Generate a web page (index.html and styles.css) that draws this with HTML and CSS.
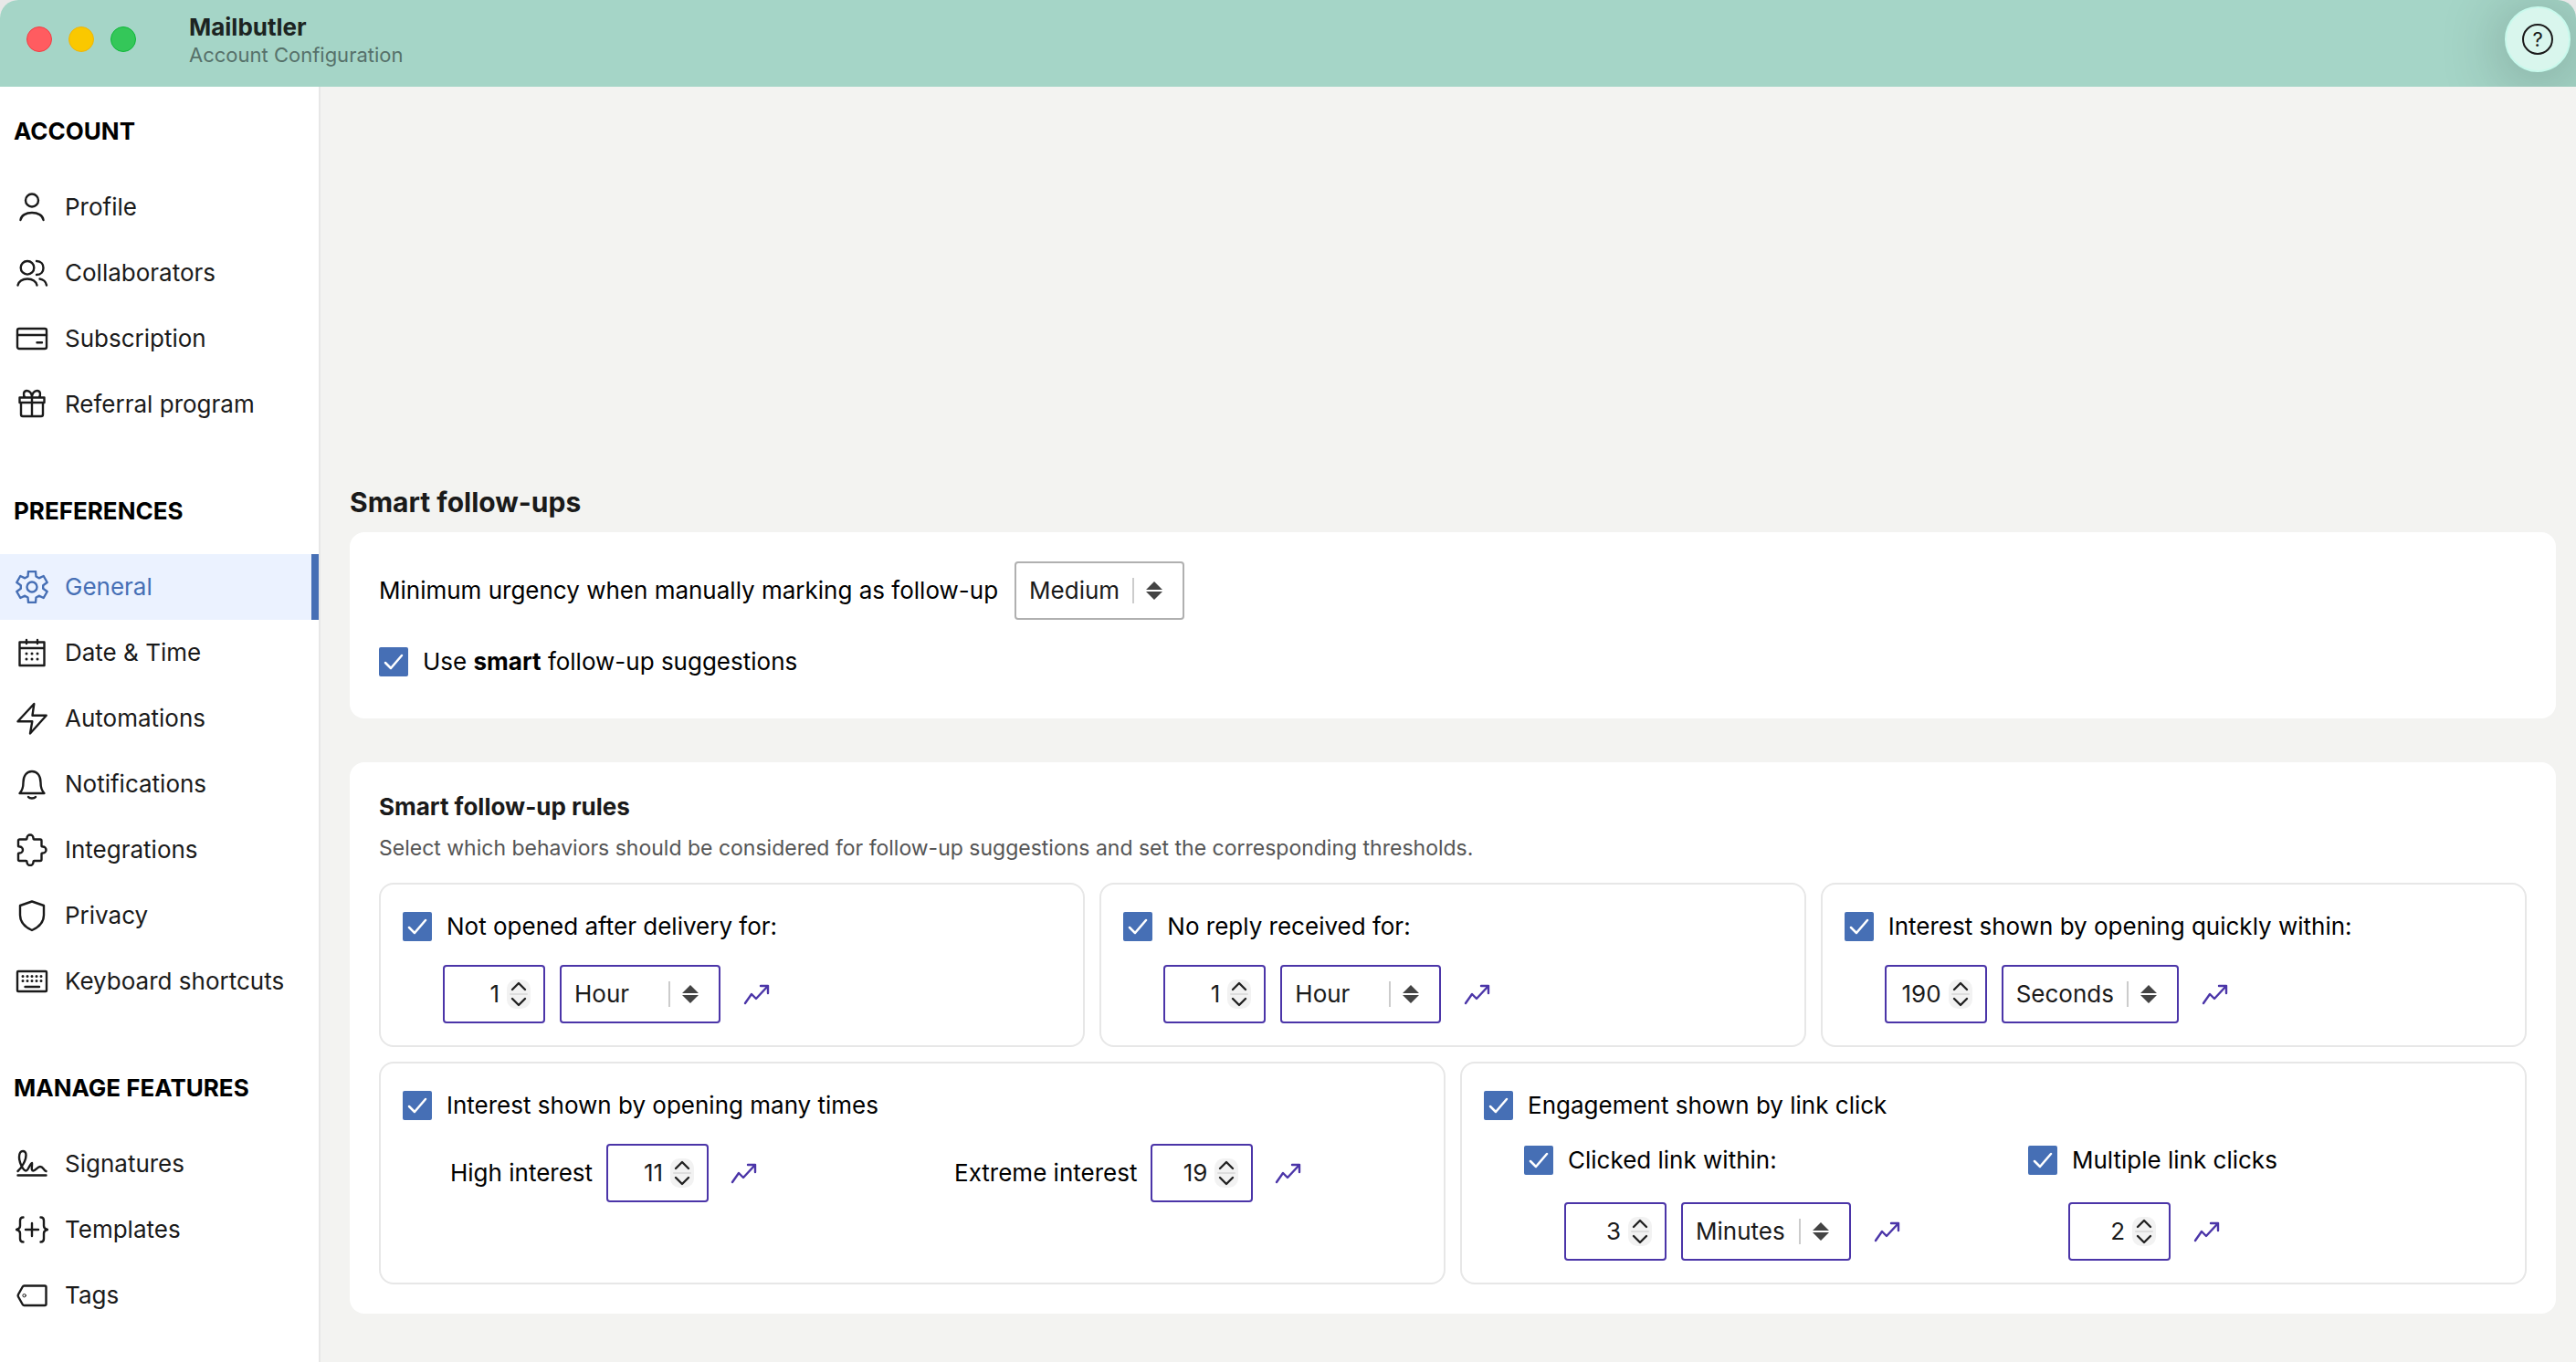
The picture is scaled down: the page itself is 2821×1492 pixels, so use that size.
FILE: index.html
```html
<!DOCTYPE html>
<html lang="en">
<head>
  <meta charset="UTF-8">
  <title>Mailbutler</title>
  <link rel="stylesheet" href="styles.css">
</head>
<body>
  <!-- Shared icons -->
  <svg class="sprite" aria-hidden="true">
    <symbol id="trend" viewBox="0 0 30 24">
      <path d="M2 22L9 12l5 5L27 3M19 3h8v8" />
    </symbol>
    <symbol id="stepper" viewBox="0 0 26 32">
      <path class="step-line" d="M4 16h18" />
      <path d="M6 11l7-7 7 7M6 21l7 7 7-7" />
    </symbol>
    <symbol id="arrows" viewBox="0 0 34 28">
      <path class="divider" d="M1 0v28" />
      <path class="triangle" d="M24 4l9 9H15zM24 24l9-9H15z" />
    </symbol>
  </svg>

  <div class="window">
    <header class="titlebar">
      <div class="lights">
        <span class="light red"></span>
        <span class="light yellow"></span>
        <span class="light green"></span>
      </div>
      <div class="titles">
        <h1>Mailbutler</h1>
        <p>Account Configuration</p>
      </div>
      <button class="help" aria-label="Help"><span>?</span></button>
    </header>

    <div class="layout">
      <nav class="sidebar">
        <section class="group">
          <h2>ACCOUNT</h2>
          <a href="#"><svg viewBox="0 0 36 36"><circle cx="18" cy="10.5" r="7" /><path d="M5.5 32c.5-5 6-8 12.5-8s12 3 12.5 8" /></svg>Profile</a>
          <a href="#"><svg viewBox="0 0 36 36"><circle cx="13" cy="12.3" r="7.3" /><path d="M2.5 31.5c.5-4 5-7 10.500-7s10 3 10.500 7M23 5c5 0 7.500 3.500 7.500 7.500S28 20 23 20M26.5 24.5c4 .5 7 3.500 7.500 7" /></svg>Collaborators</a>
          <a href="#"><svg viewBox="0 0 36 36"><rect x="2" y="7" width="32" height="22" rx="2" /><path d="M2 14h32M23.5 22.3h5.5" /></svg>Subscription</a>
          <a href="#"><svg viewBox="0 0 36 36"><path d="M4.5 10.5h27V16h-27zM6 16v13a2 2 0 0 0 2 2h20a2 2 0 0 0 2-2V16M18 10.5V31M18 10.5C18 6 15.5 3 12.500 3 8.500 3 8 8 10.500 10.5M18 10.5C18 6 20.500 3 23.500 3c4 0 4.500 5 2 7.500" /></svg>Referral program</a>
        </section>

        <section class="group">
          <h2>PREFERENCES</h2>
          <a href="#" class="active"><svg viewBox="0 0 36 36"><path d="M13.5 6.5L14 1h8l.5 5.500 3.200 1.800 5-2.300 4 7-4.500 3.200v3.600l4.500 3.200-4 7-5-2.300-3.200 1.800L22 35h-8l-.5-5.500-3.200-1.800-5 2.300-4-7 4.500-3.200v-3.600L1.300 13l4-7 5 2.300z" /><circle cx="18" cy="18" r="5.5" /></svg>General</a>
          <a href="#"><svg viewBox="0 0 36 36"><path d="M4.5 6.5h27V32h-27zM4.5 13h27M12 4v4M24 4v4" /><path class="dots" d="M12 19h0M18 19h0M24 19h0M12 25h0M18 25h0M24 25h0" /></svg>Date &amp; Time</a>
          <a href="#"><svg viewBox="0 0 36 36"><path d="M20.3 2L2.5 21.3h15.8L16 34.5l17.700-19.800H18.500z" /></svg>Automations</a>
          <a href="#"><svg viewBox="0 0 36 36"><path d="M4.5 28c3-3 4-6 4-12 0-7 3.500-12 9.500-12s9.500 5 9.500 12c0 6 1 9 4 12zM14 32c1.500 2 6.500 2 8 0" /></svg>Notifications</a>
          <a href="#"><svg viewBox="0 0 36 36"><path d="M3 8a1.500 1.500 0 0 1 1.500-1.500h7q1 0 1-1.500a3.500 3.500 0 0 1 7 0q0 1.500 1 1.500H27A1.500 1.500 0 0 1 28.500 8v5.500q0 1 1.500 1a3.500 3.500 0 0 1 0 7q-1.500 0-1.500 1V28.500A1.500 1.500 0 0 1 27 30h-6.500q-1 0-1 1.500a3.500 3.500 0 0 1-7 0q0-1.500-1-1.500h-7A1.500 1.500 0 0 1 3 28.500v-6q0-1 1.500-1a3.500 3.500 0 0 0 0-7q-1.500 0-1.500-1z" /></svg>Integrations</a>
          <a href="#"><svg viewBox="0 0 36 36"><path d="M18 2.500L31 7v10.500c0 8-5 13-13 16.500C10 30.500 5 25.500 5 17.500V7z" /></svg>Privacy</a>
          <a href="#"><svg viewBox="0 0 36 36"><rect x="2" y="7" width="32" height="22" rx="1" /><path d="M10.500 24H26" /><path class="dots" d="M8 12.500h0M13 12.500h0M18 12.500h0M23 12.500h0M28 12.500h0M8 17.500h0M13 17.500h0M18 17.500h0M23 17.500h0M28 17.500h0" /></svg>Keyboard shortcuts</a>
        </section>

        <section class="group">
          <h2>MANAGE FEATURES</h2>
          <a href="#"><svg viewBox="0 0 36 36"><path d="M2.500 30.500h31M2.500 26C7 22 11.500 14 11.500 8.500 11.500 5 10 4 8 4S4 6 4 10.500C4 16 8 25.500 11.500 25.500c2.500 0 4-7.500 6.500-8.500.5 3-1.500 8.500 1.500 8.500 2.500 0 4.500-4.500 7.500-4.500 3.500 0 3.500 4 6.500 5" /></svg>Signatures</a>
          <a href="#"><svg viewBox="0 0 36 36"><path d="M8.500 4.500C5.500 4.500 5 6 5 8v6q0 3-4 4 4 1 4 4v6c0 2 .5 3.500 3.500 3.500M27.500 4.500c3 0 3.500 1.500 3.500 3.500v6q0 3 4 4-4 1-4 4v6c0 2-.5 3.500-3.500 3.500M18 11v14M11 18h14" /></svg>Templates</a>
          <a href="#"><svg viewBox="0 0 36 36"><path d="M9.500 7.500H32a1.500 1.500 0 0 1 1.500 1.500v18.500A1.500 1.500 0 0 1 32 29H9.500a2 2 0 0 1-1.700-1L3 19.500a2.500 2.500 0 0 1 0-2.500l4.800-8.500a2 2 0 0 1 1.700-1z" /><circle class="thin" cx="9.600" cy="18.200" r="1.700" /></svg>Tags</a>
        </section>
      </nav>

      <main class="content">
        <h2>Smart follow-ups</h2>

        <section class="card">
          <div class="row urgency">
            <label for="urgency">Minimum urgency when manually marking as follow-up</label>
            <div class="select gray">
              <select id="urgency"><option>Medium</option></select>
              <svg><use href="#arrows" /></svg>
            </div>
          </div>
          <label class="check"><input type="checkbox" checked><span>Use <b>smart</b> follow-up suggestions</span></label>
        </section>

        <section class="card rules">
          <h3>Smart follow-up rules</h3>
          <p>Select which behaviors should be considered for follow-up suggestions and set the corresponding thresholds.</p>

          <div class="grid three">
            <div class="rule">
              <label class="check"><input type="checkbox" checked>Not opened after delivery for:</label>
              <div class="row indent">
                <div class="number"><input type="number" value="1" aria-label="Not opened amount"><svg><use href="#stepper" /></svg></div>
                <div class="select short">
                  <select aria-label="Not opened unit"><option>Hour</option></select>
                  <svg><use href="#arrows" /></svg>
                </div>
                <button class="trend" aria-label="Suggest value"><svg><use href="#trend" /></svg></button>
              </div>
            </div>
            <div class="rule">
              <label class="check"><input type="checkbox" checked>No reply received for:</label>
              <div class="row indent">
                <div class="number"><input type="number" value="1" aria-label="No reply amount"><svg><use href="#stepper" /></svg></div>
                <div class="select short">
                  <select aria-label="No reply unit"><option>Hour</option></select>
                  <svg><use href="#arrows" /></svg>
                </div>
                <button class="trend" aria-label="Suggest value"><svg><use href="#trend" /></svg></button>
              </div>
            </div>
            <div class="rule">
              <label class="check"><input type="checkbox" checked>Interest shown by opening quickly within:</label>
              <div class="row indent">
                <div class="number"><input type="number" value="190" aria-label="Quick opening amount"><svg><use href="#stepper" /></svg></div>
                <div class="select long">
                  <select aria-label="Quick opening unit"><option>Seconds</option></select>
                  <svg><use href="#arrows" /></svg>
                </div>
                <button class="trend" aria-label="Suggest value"><svg><use href="#trend" /></svg></button>
              </div>
            </div>
          </div>

          <div class="grid two">
            <div class="rule">
              <label class="check"><input type="checkbox" checked>Interest shown by opening many times</label>
              <div class="columns">
                <div class="row interest">
                  <label for="high">High interest</label>
                  <div class="number"><input type="number" id="high" value="11"><svg><use href="#stepper" /></svg></div>
                  <button class="trend" aria-label="Suggest value"><svg><use href="#trend" /></svg></button>
                </div>
                <div class="row interest">
                  <label for="extreme">Extreme interest</label>
                  <div class="number"><input type="number" id="extreme" value="19"><svg><use href="#stepper" /></svg></div>
                  <button class="trend" aria-label="Suggest value"><svg><use href="#trend" /></svg></button>
                </div>
              </div>
            </div>
            <div class="rule">
              <label class="check"><input type="checkbox" checked>Engagement shown by link click</label>
              <div class="columns clicks">
                <div>
                  <label class="check"><input type="checkbox" checked>Clicked link within:</label>
                  <div class="row indent">
                    <div class="number"><input type="number" value="3" aria-label="Clicked link amount"><svg><use href="#stepper" /></svg></div>
                    <div class="select">
                      <select aria-label="Clicked link unit"><option>Minutes</option></select>
                      <svg><use href="#arrows" /></svg>
                    </div>
                    <button class="trend" aria-label="Suggest value"><svg><use href="#trend" /></svg></button>
                  </div>
                </div>
                <div>
                  <label class="check"><input type="checkbox" checked>Multiple link clicks</label>
                  <div class="row indent">
                    <div class="number"><input type="number" value="2" aria-label="Number of link clicks"><svg><use href="#stepper" /></svg></div>
                    <button class="trend" aria-label="Suggest value"><svg><use href="#trend" /></svg></button>
                  </div>
                </div>
              </div>
            </div>
          </div>
        </section>
      </main>
    </div>
  </div>
</body>
</html>
```
FILE: styles.css
```css
* {
  box-sizing: border-box;
}

body {
  margin: 0;
  background-color: #e8e8e8;
  color: #000;
  font-family: Inter, "Liberation Sans", sans-serif;
  font-size: 26px;
  line-height: 32px;
}

h1, h2, h3, p {
  margin: 0;
}

input, select, button {
  font: inherit;
  color: #1a1a1a;
}

svg {
  fill: none;
  stroke: currentColor;
  stroke-width: 2.4;
  stroke-linecap: round;
  stroke-linejoin: round;
}

.sprite {
  display: none;
}

.window {
  display: flex;
  flex-direction: column;
  min-height: 100vh;
  border-radius: 20px 20px 0 0;
  background-color: #f3f3f1;
  overflow: hidden;
}

/* Title bar */
.titlebar {
  display: flex;
  align-items: flex-start;
  height: 95px;
  padding: 7px 6px 0 29px;
  background-color: #a5d5c7;
  overflow: hidden;
}

.lights {
  display: flex;
  gap: 18px;
  padding-top: 22px;
}

.light {
  width: 28px;
  height: 28px;
  border-radius: 50%;
}

.red {
  background-color: #ff5c60;
  border: 1px solid #f23d44;
}

.yellow {
  background-color: #fac800;
  border: 1px solid #edb50c;
}

.green {
  background-color: #34c759;
  border: 1px solid #0fb83a;
}

.titles {
  flex: 1;
  padding: 7px 0 0 58px;
}

.titles h1 {
  font-size: 26px;
  line-height: 32px;
  color: #1c2422;
}

.titles p {
  font-size: 22px;
  line-height: 28px;
  color: #56716a;
}

.help {
  display: flex;
  align-items: center;
  justify-content: center;
  width: 72px;
  height: 72px;
  padding: 0;
  border: 2px solid #c8f9ec;
  border-radius: 50%;
  background-color: #d9f6ed;
  box-shadow: 0 8px 72px rgba(0, 0, 0, 0.3);
}

.help span {
  width: 34px;
  height: 34px;
  border: 2px solid #1a1a1a;
  border-radius: 50%;
  font-size: 22px;
  line-height: 30px;
}

.layout {
  display: flex;
  flex: 1;
}

/* Sidebar */
.sidebar {
  flex: none;
  width: 351px;
  padding-top: 33px;
  border-right: 2px solid #e7e7e7;
  background-color: #fff;
}

.group {
  margin-bottom: 65px;
}

.group:last-child {
  margin-bottom: 0;
}

.group h2 {
  margin: 0 0 31px 15px;
  font-size: 26px;
}

.group a {
  display: flex;
  align-items: center;
  gap: 18px;
  height: 72px;
  padding-left: 17px;
  color: #1a1a1a;
  text-decoration: none;
}

.group svg {
  width: 36px;
  height: 36px;
}

.group .dots {
  stroke-width: 3;
}

.group .thin {
  stroke-width: 1;
}

.group a.active {
  color: #466fb5;
  background: linear-gradient(#466fb5, #466fb5) right / 8px 100% no-repeat #ebf2ff;
}

/* Settings */
.content {
  flex: 1;
  padding: 437px 22px 53px 32px;
}

.content h2 {
  margin-bottom: 15px;
  font-size: 30px;
  line-height: 36px;
  color: #1a1a1a;
}

.card {
  padding: 32px;
  border-radius: 16px;
  background-color: #fff;
}

.card + .card {
  margin-top: 48px;
}

.row {
  display: flex;
  align-items: center;
  gap: 16px;
}

.urgency {
  gap: 18px;
  margin-bottom: 30px;
}

.urgency + .check {
  margin-bottom: 14px;
}

.check {
  display: flex;
  align-items: center;
  gap: 16px;
}

.check input {
  appearance: none;
  flex: none;
  width: 32px;
  height: 32px;
  margin: 0;
  border: 2px solid #466fb5;
  border-radius: 2px;
}

.check input:checked {
  background: #466fb5 url("data:image/svg+xml,%3Csvg xmlns='http://www.w3.org/2000/svg' viewBox='0 0 32 32'%3E%3Cpath d='M7 17l6 6L25 9' fill='none' stroke='white' stroke-width='2.5' stroke-linecap='round' stroke-linejoin='round'/%3E%3C/svg%3E") center / 32px no-repeat;
}

.select {
  position: relative;
  width: 186px;
  height: 64px;
}

.select.short {
  width: 176px;
}

.select.long {
  width: 194px;
}

.select select {
  appearance: none;
  width: 100%;
  height: 100%;
  padding: 0 56px 0 14px;
  border: 2px solid #4b35a8;
  border-radius: 4px;
  background-color: #fff;
}

.select.gray select {
  border-color: #b0b0b0;
}

.select svg {
  position: absolute;
  top: 18px;
  right: 23px;
  width: 34px;
  height: 28px;
  pointer-events: none;
}

.divider {
  stroke: #ccc;
  stroke-width: 2;
}

.triangle {
  fill: #444;
  stroke: none;
}

.number {
  display: flex;
  align-items: center;
  gap: 8px;
  width: 112px;
  height: 64px;
  padding: 0 14px;
  border: 2px solid #4b35a8;
  border-radius: 4px;
}

.number input {
  appearance: textfield;
  flex: 1;
  min-width: 0;
  padding: 0;
  border: 0;
  background: none;
  text-align: right;
  outline: none;
}

.number input::-webkit-inner-spin-button {
  display: none;
}

.number svg {
  flex: none;
  width: 26px;
  height: 32px;
  border-radius: 10px;
  background-color: #f2f2f2;
  color: #222;
}

.step-line {
  stroke: #ddd;
  stroke-width: 2;
}

.trend {
  height: 24px;
  margin-left: 9px;
  padding: 0;
  border: 0;
  background: none;
  color: #4b35a8;
}

.trend svg {
  display: block;
  width: 30px;
  height: 24px;
}

/* Rules */
.rules h3 {
  padding-top: 1px;
  font-size: 26px;
  color: #1a1a1a;
}

.rules p {
  margin: 14px 0 23px;
  font-size: 23px;
  line-height: 30px;
  color: #555;
}

.grid {
  display: grid;
  gap: 16px;
  margin-top: 16px;
}

.three {
  grid-template-columns: repeat(3, 1fr);
}

.two {
  grid-template-columns: repeat(2, 1fr);
}

.rule {
  padding: 30px 24px 24px;
  border: 2px solid #e7e7e7;
  border-radius: 16px;
}

.indent {
  margin: 26px 0 0 44px;
}

.columns {
  display: grid;
  grid-template-columns: 1fr 1fr;
  gap: 32px;
  margin: 26px 0 0 44px;
}

.interest {
  gap: 15px;
  padding-left: 8px;
}

.clicks {
  margin-top: 28px;
}

.clicks .indent {
  margin-top: 30px;
}
```
